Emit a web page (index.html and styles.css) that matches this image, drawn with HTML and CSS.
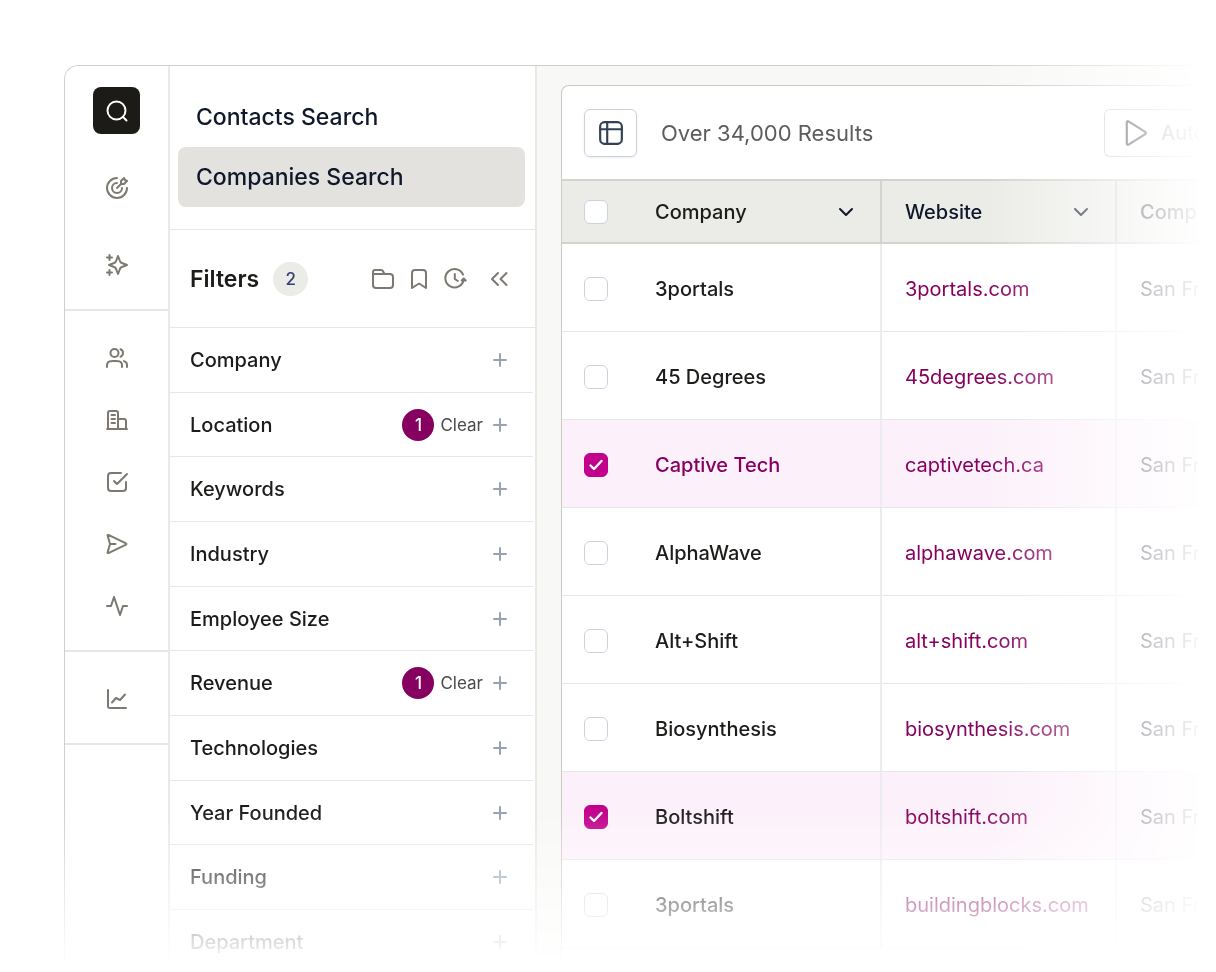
FILE: index.html
```html
<!DOCTYPE html>
<html lang="en">
<head>
    <meta charset="UTF-8">
    <meta name="viewport" content="width=device-width, initial-scale=1.0">
    <title>Companies Search</title>
    <link rel="stylesheet" href="styles.css">
</head>
<body>
    <div class="app">
        <!-- Icon rail -->
        <nav class="rail" aria-label="Main">
            <div class="rail-group rail-group-top">
                <a href="#" class="rail-link active" aria-label="Search">
                    <svg class="icon" viewBox="0 0 24 24"><circle cx="11.500" cy="11.500" r="9"/><path d="m21.500 21.500-3.600-3.600"/></svg>
                </a>
                <a href="#" class="rail-link" aria-label="Targets">
                    <svg class="icon" viewBox="0 0 24 24"><path d="M16 8V5l3-3 1 2 2 1-3 3h-3Zm0 0-4 4m10 0c0 5.523-4.477 10-10 10S2 17.523 2 12 6.477 2 12 2m5 10a5 5 0 1 1-5-5"/></svg>
                </a>
                <a href="#" class="rail-link" aria-label="Discover">
                    <svg class="icon" viewBox="0 0 24 24"><path d="M4.500 22v-5m0-10V2M2 4.500h5m-5 15h5M13 3l-1.734 4.509c-.282.733-.423 1.100-.642 1.408a3 3 0 0 1-.707.707c-.308.219-.675.360-1.408.642L4 12l4.509 1.734c.733.282 1.100.423 1.408.642.273.194.513.434.707.707.219.308.360.675.642 1.408L13 21l1.734-4.509c.282-.733.423-1.100.642-1.408.194-.273.434-.513.707-.707.308-.219.675-.360 1.408-.642L22 12l-4.509-1.734c-.733-.282-1.100-.423-1.408-.642a3 3 0 0 1-.707-.707c-.219-.308-.360-.675-.642-1.408L13 3Z"/></svg>
                </a>
            </div>
            <div class="rail-group">
                <a href="#" class="rail-link" aria-label="Contacts">
                    <svg class="icon" viewBox="0 0 24 24"><path d="M22 21v-2a4 4 0 0 0-3-3.874M15.500 3.291a4.001 4.001 0 0 1 0 7.418M17 21c0-1.864 0-2.796-.305-3.530a4 4 0 0 0-2.164-2.165C13.796 15 12.864 15 11 15H8c-1.864 0-2.796 0-3.530.305a4 4 0 0 0-2.166 2.164C2 18.204 2 19.136 2 21M13.500 7a4 4 0 1 1-8 0 4 4 0 0 1 8 0Z"/></svg>
                </a>
                <a href="#" class="rail-link" aria-label="Companies">
                    <svg class="icon" viewBox="0 0 24 24"><path d="M13 11h6a2 2 0 0 1 2 2v8M3 21V5a2 2 0 0 1 2-2h6a2 2 0 0 1 2 2v16M2 21h20M6.500 7h3.500M6.500 11h3.500M6.500 15h3.500"/></svg>
                </a>
                <a href="#" class="rail-link" aria-label="Tasks">
                    <svg class="icon" viewBox="0 0 24 24"><path d="M16 3H6a3 3 0 0 0-3 3v12a3 3 0 0 0 3 3h12a3 3 0 0 0 3-3v-6M9 11l3 3L22 4"/></svg>
                </a>
                <a href="#" class="rail-link" aria-label="Sequences">
                    <svg class="icon" viewBox="0 0 24 24"><path d="M10.500 12H5M2.600 3.600c-.100-.500.300-.900.800-.700L21 11.400c.500.200.500.900 0 1.200L3.400 21.100c-.500.200-.900-.200-.800-.700L5 12z"/></svg>
                </a>
                <a href="#" class="rail-link" aria-label="Activity">
                    <svg class="icon" viewBox="0 0 24 24"><path d="M2 12h4l3-9 6 18 3-9h4"/></svg>
                </a>
            </div>
            <div class="rail-group">
                <a href="#" class="rail-link" aria-label="Reports">
                    <svg class="icon" viewBox="0 0 24 24"><path d="M3 3v16.600c0 .900.500 1.400 1.400 1.400H21M7 15.500l4-4.500 4 2 5-5.500"/></svg>
                </a>
            </div>
        </nav>

        <!-- Filters panel -->
        <aside class="panel">
            <div class="search-tabs">
                <a href="#" class="search-tab">Contacts Search</a>
                <a href="#" class="search-tab active" aria-current="page">Companies Search</a>
            </div>

            <div class="filters-header">
                <h2>Filters</h2>
                <span class="filters-count">2</span>
                <div class="filters-actions">
                    <button type="button" class="icon-btn" aria-label="Folders">
                        <svg class="icon" viewBox="0 0 24 24"><path d="M2 7h17a3 3 0 0 1 3 3v8a3 3 0 0 1-3 3H5a3 3 0 0 1-3-3zM2 7V5a2 2 0 0 1 2-2h6.200a2 2 0 0 1 1.700 1L13.400 7"/></svg>
                    </button>
                    <button type="button" class="icon-btn" aria-label="Saved filters">
                        <svg class="icon" viewBox="0 0 24 24"><path d="M5 6a3 3 0 0 1 3-3h8a3 3 0 0 1 3 3v15l-7-4.500L5 21z"/></svg>
                    </button>
                    <button type="button" class="icon-btn" aria-label="History">
                        <svg class="icon" viewBox="0 0 24 24"><path d="M20 7.500A9.200 9.200 0 1 0 20.700 12.500M11.800 7v5l3 2M18.700 13.500l2-2 2 2z"/></svg>
                    </button>
                    <button type="button" class="icon-btn collapse-btn" aria-label="Collapse filters">
                        <svg class="icon" viewBox="0 0 24 24"><path d="m11 18-6-6 6-6M19.500 18l-6-6 6-6"/></svg>
                    </button>
                </div>
            </div>

            <ul class="filter-list">
                <li class="filter">
                    <span class="filter-name">Company</span>
                    <button type="button" class="add-btn" aria-label="Add company filter"><svg class="icon" viewBox="0 0 24 24"><path d="M12 6v12M6 12h12"/></svg></button>
                </li>
                <li class="filter">
                    <span class="filter-name">Location</span>
                    <span class="filter-badge">1</span>
                    <button type="button" class="clear-btn">Clear</button>
                    <button type="button" class="add-btn" aria-label="Add location filter"><svg class="icon" viewBox="0 0 24 24"><path d="M12 6v12M6 12h12"/></svg></button>
                </li>
                <li class="filter">
                    <span class="filter-name">Keywords</span>
                    <button type="button" class="add-btn" aria-label="Add keywords filter"><svg class="icon" viewBox="0 0 24 24"><path d="M12 6v12M6 12h12"/></svg></button>
                </li>
                <li class="filter">
                    <span class="filter-name">Industry</span>
                    <button type="button" class="add-btn" aria-label="Add industry filter"><svg class="icon" viewBox="0 0 24 24"><path d="M12 6v12M6 12h12"/></svg></button>
                </li>
                <li class="filter">
                    <span class="filter-name">Employee Size</span>
                    <button type="button" class="add-btn" aria-label="Add employee size filter"><svg class="icon" viewBox="0 0 24 24"><path d="M12 6v12M6 12h12"/></svg></button>
                </li>
                <li class="filter">
                    <span class="filter-name">Revenue</span>
                    <span class="filter-badge">1</span>
                    <button type="button" class="clear-btn">Clear</button>
                    <button type="button" class="add-btn" aria-label="Add revenue filter"><svg class="icon" viewBox="0 0 24 24"><path d="M12 6v12M6 12h12"/></svg></button>
                </li>
                <li class="filter">
                    <span class="filter-name">Technologies</span>
                    <button type="button" class="add-btn" aria-label="Add technologies filter"><svg class="icon" viewBox="0 0 24 24"><path d="M12 6v12M6 12h12"/></svg></button>
                </li>
                <li class="filter">
                    <span class="filter-name">Year Founded</span>
                    <button type="button" class="add-btn" aria-label="Add year founded filter"><svg class="icon" viewBox="0 0 24 24"><path d="M12 6v12M6 12h12"/></svg></button>
                </li>
                <li class="filter">
                    <span class="filter-name">Funding</span>
                    <button type="button" class="add-btn" aria-label="Add funding filter"><svg class="icon" viewBox="0 0 24 24"><path d="M12 6v12M6 12h12"/></svg></button>
                </li>
                <li class="filter">
                    <span class="filter-name">Department</span>
                    <button type="button" class="add-btn" aria-label="Add department filter"><svg class="icon" viewBox="0 0 24 24"><path d="M12 6v12M6 12h12"/></svg></button>
                </li>
            </ul>
        </aside>

        <!-- Results -->
        <main class="main">
            <div class="results">
                <div class="toolbar">
                    <button type="button" class="view-btn" aria-label="Table view">
                        <svg class="icon" viewBox="0 0 24 24"><rect x="2" y="2" width="20" height="20" rx="4"/><path d="M2 8.500h20M8.500 2v20"/></svg>
                    </button>
                    <span class="results-count">Over 34,000 Results</span>
                    <button type="button" class="auto-btn">
                        <svg class="icon" viewBox="0 0 24 24"><path d="M3.500 2.200c0-.900.900-1.400 1.600-.900l15.600 9.800c.700.400.700 1.400 0 1.800L5.100 22.700c-.700.500-1.600 0-1.600-.900z"/></svg>
                        Auto
                    </button>
                </div>

                <table class="results-table">
                    <colgroup>
                        <col class="col-check">
                        <col class="col-company">
                        <col class="col-website">
                        <col>
                    </colgroup>
                    <thead>
                        <tr>
                            <th class="check-cell"><input type="checkbox" aria-label="Select all"></th>
                            <th class="company-cell">
                                <div class="th-content">Company
                                    <button type="button" class="sort-btn" aria-label="Sort by company"><svg class="icon" viewBox="0 0 24 24"><path d="m6 9 6 6 6-6"/></svg></button>
                                </div>
                            </th>
                            <th class="website-cell">
                                <div class="th-content">Website
                                    <button type="button" class="sort-btn" aria-label="Sort by website"><svg class="icon" viewBox="0 0 24 24"><path d="m6 9 6 6 6-6"/></svg></button>
                                </div>
                            </th>
                            <th>Comp</th>
                        </tr>
                    </thead>
                    <tbody>
                        <tr>
                            <td class="check-cell"><input type="checkbox" aria-label="Select 3portals"></td>
                            <td class="company-cell">3portals</td>
                            <td class="website-cell"><a href="#">3portals.com</a></td>
                            <td>San Fr</td>
                        </tr>
                        <tr>
                            <td class="check-cell"><input type="checkbox" aria-label="Select 45 Degrees"></td>
                            <td class="company-cell">45 Degrees</td>
                            <td class="website-cell"><a href="#">45degrees.com</a></td>
                            <td>San Fr</td>
                        </tr>
                        <tr class="selected current">
                            <td class="check-cell"><input type="checkbox" aria-label="Select Captive Tech" checked></td>
                            <td class="company-cell">Captive Tech</td>
                            <td class="website-cell"><a href="#">captivetech.ca</a></td>
                            <td>San Fr</td>
                        </tr>
                        <tr>
                            <td class="check-cell"><input type="checkbox" aria-label="Select AlphaWave"></td>
                            <td class="company-cell">AlphaWave</td>
                            <td class="website-cell"><a href="#">alphawave.com</a></td>
                            <td>San Fr</td>
                        </tr>
                        <tr>
                            <td class="check-cell"><input type="checkbox" aria-label="Select Alt+Shift"></td>
                            <td class="company-cell">Alt+Shift</td>
                            <td class="website-cell"><a href="#">alt+shift.com</a></td>
                            <td>San Fr</td>
                        </tr>
                        <tr>
                            <td class="check-cell"><input type="checkbox" aria-label="Select Biosynthesis"></td>
                            <td class="company-cell">Biosynthesis</td>
                            <td class="website-cell"><a href="#">biosynthesis.com</a></td>
                            <td>San Fr</td>
                        </tr>
                        <tr class="selected">
                            <td class="check-cell"><input type="checkbox" aria-label="Select Boltshift" checked></td>
                            <td class="company-cell">Boltshift</td>
                            <td class="website-cell"><a href="#">boltshift.com</a></td>
                            <td>San Fr</td>
                        </tr>
                        <tr>
                            <td class="check-cell"><input type="checkbox" aria-label="Select 3portals"></td>
                            <td class="company-cell">3portals</td>
                            <td class="website-cell"><a href="#">buildingblocks.com</a></td>
                            <td>San Fr</td>
                        </tr>
                    </tbody>
                </table>
            </div>
        </main>
    </div>
</body>
</html>
```
FILE: styles.css
```css
* {
    margin: 0;
    padding: 0;
    box-sizing: border-box;
}

body {
    font-family: Inter, 'Liberation Sans', sans-serif;
    font-size: 20px;
    line-height: 28px;
    color: #1c1c1a;
    background: white;
    height: 100vh;
    padding: 65px 18px 6px 64px;
    overflow: hidden;
}

button {
    font: inherit;
    color: inherit;
    background: none;
    border: none;
    cursor: pointer;
}

a {
    color: inherit;
    text-decoration: none;
}

.icon {
    display: block;
    width: 24px;
    height: 24px;
    fill: none;
    stroke: currentColor;
    stroke-width: 2;
    stroke-linecap: round;
    stroke-linejoin: round;
}

/* The whole window fades out to the right and to the bottom */
.app {
    display: flex;
    height: 100%;
    border: 1px solid #cfd0cb;
    border-right: none;
    border-bottom: none;
    border-radius: 14px 0 0 0;
    overflow: hidden;
    mask-image: linear-gradient(to right, #000 calc(100% - 213px), transparent calc(100% + 8px)),
        linear-gradient(to bottom, #000 calc(100% - 156px), transparent 100%);
    mask-composite: intersect;
}

/* Icon rail */
.rail {
    flex: none;
    width: 105px;
    border-right: 2px solid #e9e9e7;
    color: #7d7972;
}

.rail-group {
    display: flex;
    flex-direction: column;
    align-items: center;
    gap: 15px;
    padding: 23px 0 21px;
    border-bottom: 2px solid #e6e6e2;
}

.rail-group-top {
    gap: 30px;
    padding: 21px 0;
}

.rail-link {
    display: flex;
    align-items: center;
    justify-content: center;
    width: 47px;
    height: 47px;
    border-radius: 8px;
}

.rail-link.active {
    background: #1c1b17;
    color: white;
}

/* Filters panel */
.panel {
    flex: none;
    width: 367px;
    border-right: 2px solid #e8e8e8;
}

.search-tabs {
    display: flex;
    flex-direction: column;
    padding: 21px 10px 22px 8px;
    border-bottom: 1px solid #e6e6e8;
    font-size: 23px;
    font-weight: 500;
    color: #0f172a;
}

.search-tab {
    padding: 16px 18px;
    border-radius: 8px;
}

.search-tab.active {
    background: #e3e2de;
}

.filters-header {
    display: flex;
    align-items: center;
    height: 98px;
    padding: 0 24px 0 20px;
    border-bottom: 1px solid #e6e6e8;
}

.filters-header h2 {
    font-size: 23px;
    font-weight: 600;
}

.filters-count {
    width: 35px;
    margin-left: 14px;
    border-radius: 17px;
    background: #ebece7;
    color: #363f72;
    font-size: 17px;
    font-weight: 500;
    line-height: 34px;
    text-align: center;
}

.filters-actions {
    display: flex;
    gap: 12px;
    margin-left: auto;
    color: #7d7972;
}

.collapse-btn {
    margin-left: 8px;
}

.filter-list {
    display: grid;
    grid-auto-rows: 65px 64px 65px;
    list-style: none;
    margin-right: 2px;
}

.filter {
    display: flex;
    align-items: center;
    padding: 0 21px 0 20px;
    border-bottom: 1px solid #e6e7ec;
    font-weight: 500;
}

.filter-name {
    flex: 1;
}

.filter-badge {
    width: 32px;
    border-radius: 16px;
    background: #86005f;
    color: white;
    font-size: 17px;
    line-height: 32px;
    text-align: center;
}

.clear-btn {
    margin: 0 5px 0 6px;
    color: #4b4b4b;
    font-size: 17px;
    font-weight: 400;
}

.add-btn {
    color: #98a2b3;
}

/* Results */
.main {
    flex: 1;
    min-width: 0;
    padding: 19px 0 0 24px;
    background: #f8f8f6;
}

.results {
    height: 100%;
    border: 1px solid #c9cac5;
    border-right: none;
    border-bottom: none;
    border-radius: 8px 0 0 0;
    background: white;
    overflow: hidden;
}

.toolbar {
    display: flex;
    align-items: center;
    height: 93px;
    padding-left: 22px;
}

.view-btn {
    display: flex;
    align-items: center;
    justify-content: center;
    width: 53px;
    height: 48px;
    border: 1px solid #cbd2de;
    border-radius: 6px;
    box-shadow: 0 1px 2px rgba(16, 24, 40, 0.08);
    color: #334155;
}

.view-btn .icon {
    width: 26px;
    height: 26px;
}

.results-count {
    margin-left: 24px;
    color: #5c5c5c;
    font-size: 22px;
}

.auto-btn {
    display: flex;
    align-items: center;
    gap: 12px;
    width: 94px;
    height: 48px;
    margin-left: auto;
    padding-left: 18px;
    border: 1px solid #c3cad6;
    border-right: none;
    border-radius: 6px 0 0 6px;
    color: #8b95a7;
    font-weight: 500;
}

.auto-btn .icon {
    flex: none;
    width: 26px;
    height: 26px;
    color: #1d2433;
}

.results-table {
    width: 100%;
    table-layout: fixed;
    border-collapse: separate;
    border-spacing: 0;
    color: #0f172a;
    text-align: left;
    white-space: nowrap;
}

.col-check {
    width: 93px;
}

.col-company {
    width: 227px;
}

.col-website {
    width: 235px;
}

.results-table th {
    height: 65px;
    padding: 0 0 0 23px;
    border-top: 2px solid #d3d4cf;
    border-bottom: 2px solid #d3d4cf;
    background: #ebece7;
    font-weight: 500;
}

.results-table td {
    height: 88px;
    padding: 2px 0 0 23px;
    border-bottom: 1px solid #e4e6eb;
}

.results-table .check-cell {
    padding-left: 22px;
}

.results-table .company-cell {
    padding-left: 0;
    border-right: 2px solid #ebebf0;
    color: #1c1c1a;
    font-weight: 500;
}

.results-table .website-cell {
    border-right: 2px solid #ebebf0;
}

.results-table thead .company-cell,
.results-table thead .website-cell {
    border-right-color: #d3d4cf;
}

.th-content {
    display: flex;
    align-items: center;
    justify-content: space-between;
    padding-right: 22px;
}

.sort-btn {
    color: #0f172a;
}

.website-cell a {
    color: #86005f;
}

.selected td {
    background: #fcf1fa;
}

.results-table .current .company-cell {
    color: #86005f;
}

input[type="checkbox"] {
    appearance: none;
    display: block;
    width: 24px;
    height: 24px;
    border: 1px solid #cbd2de;
    border-radius: 6px;
    background: white;
}

input[type="checkbox"]:checked {
    border-color: #c1008b;
    background: #c1008b url("data:image/svg+xml,%3Csvg xmlns='http://www.w3.org/2000/svg' viewBox='0 0 20 20' fill='none' stroke='white' stroke-width='2.4' stroke-linecap='round' stroke-linejoin='round'%3E%3Cpath d='m4.500 10.500 3.500 3.500L15.500 6'/%3E%3C/svg%3E") center / 20px 20px no-repeat;
}
```
